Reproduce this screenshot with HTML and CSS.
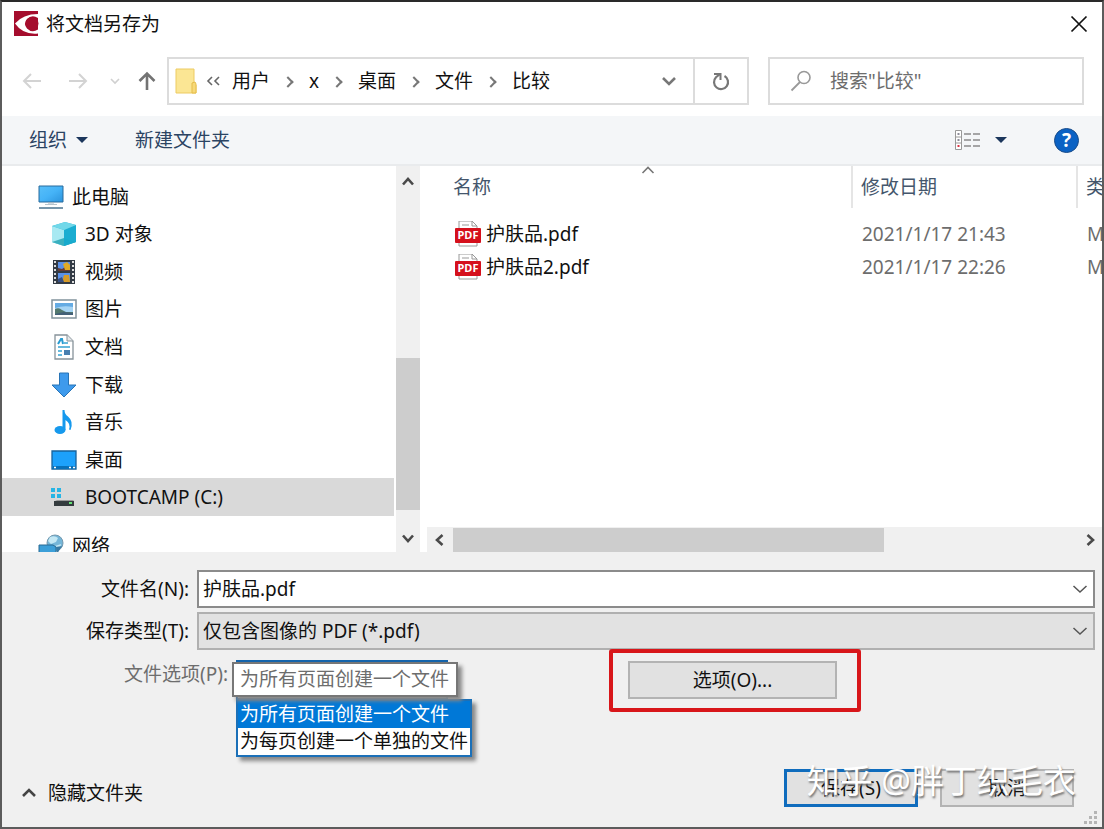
FILE: index.html
```html
<!DOCTYPE html>
<html lang="zh-CN">
<head>
<meta charset="utf-8">
<title>将文档另存为</title>
<link rel="stylesheet" href="styles.css">
</head>
<body>
<main class="window">
  <header class="titlebar">
    <svg class="app-icon" viewBox="0 0 26 26" aria-hidden="true"><path fill="#a50d2d" d="M1 0h24v25H1z"/><path fill="#fff" d="M2 12.500Q10 3 25 3v4Q19 3 14 8q-4 4.500 0 9.500 5 5 11 1v4Q10 24 2 12.500z"/><circle cx="19" cy="12.500" r="6.500" fill="#a50d2d"/></svg>
    <h1 class="title">将文档另存为</h1>
    <button class="icon-button close" aria-label="关闭"><svg width="18" height="18" viewBox="0 0 18 18"><path d="M1.500 1.500l15 15m0-15l-15 15" stroke="#111" stroke-width="1.700"/></svg></button>
  </header>

  <nav class="navbar" aria-label="位置">
    <div class="history">
      <button class="icon-button" aria-label="后退"><svg width="20" height="18" viewBox="0 0 20 18"><path d="M19 9H2m7-7L2 9l7 7" stroke="#d3d3d3" stroke-width="2" fill="none"/></svg></button>
      <button class="icon-button" aria-label="前进"><svg width="20" height="18" viewBox="0 0 20 18"><path d="M1 9h17m-7-7l7 7-7 7" stroke="#d3d3d3" stroke-width="2" fill="none"/></svg></button>
      <button class="icon-button" aria-label="最近位置"><svg width="10" height="8" viewBox="0 0 10 8"><path d="M1 2l4 4 4-4" stroke="#d0d0d0" stroke-width="1.600" fill="none"/></svg></button>
      <button class="icon-button" aria-label="向上"><svg width="18" height="20" viewBox="0 0 18 20"><path d="M9 19V2M1.500 10L9 2.500l7.500 7.500" stroke="#737373" stroke-width="2.600" fill="none"/></svg></button>
    </div>
    <div class="address">
      <svg class="folder" viewBox="0 0 22 26" aria-hidden="true"><path d="M1 1h18v14l2 2v8H1z" fill="#fbe694" stroke="#edcb63"/><path d="M17 25V15l3-1 1 2v9z" fill="#f7d978" stroke="#e5bd4b"/></svg>
      <svg class="overflow-mark" width="14" height="10" viewBox="0 0 14 10" aria-hidden="true"><path d="M6 1L2 5l4 4m7-8L9 5l4 4" stroke="#666" stroke-width="1.600" fill="none"/></svg>
      <ol class="crumbs">
        <li>用户</li><li>x</li><li>桌面</li><li>文件</li><li>比较</li>
      </ol>
      <button class="icon-button expand" aria-label="展开地址"><svg width="16" height="11" viewBox="0 0 16 11"><path d="M2 2l6 6 6-6" stroke="#777" stroke-width="2.600" fill="none"/></svg></button>
      <button class="icon-button refresh" aria-label="刷新"><svg width="20" height="20" viewBox="0 0 20 20"><path d="M13.500 5A7 7 0 1 1 5 6.200L8.500 3.500" stroke="#777" stroke-width="2.200" fill="none"/><path d="M3 3h6.500v6" stroke="#777" stroke-width="2" fill="none"/></svg></button>
    </div>
    <label class="search">
      <svg width="22" height="22" viewBox="0 0 22 22" aria-hidden="true"><circle cx="14" cy="7.500" r="6" stroke="#999" stroke-width="1.600" fill="none"/><path d="M10 12l-8.500 8.500" stroke="#999" stroke-width="1.800"/></svg>
      <input type="search" placeholder='搜索"比较"' aria-label="搜索">
    </label>
  </nav>

  <div class="toolbar">
    <button class="tool">组织 <span class="caret"></span></button>
    <button class="tool">新建文件夹</button>
    <button class="tool view" aria-label="更改视图"><svg width="27" height="22" viewBox="0 0 27 22"><path d="M1.500 1.500h6v19h-6zM1.500 8h6m-6 6h6" stroke="#999" fill="#fff"/><path d="M3.500 5h2m-2 6h2" stroke="#667" stroke-width="1.500"/><path d="M3.500 17h2" stroke="#d34" stroke-width="2"/><path d="M10 5h7m2 0h7m-16 6h7m2 0h7m-16 6h7m2 0h7" stroke="#8a8a8a" stroke-width="1.600"/></svg><span class="caret"></span></button>
    <button class="help" aria-label="帮助">?</button>
  </div>

  <section class="browser">
    <aside class="sidebar">
      <ul class="tree">
        <li class="root"><svg viewBox="0 0 26 26"><defs><linearGradient id="screen" x2="1" y2="1"><stop stop-color="#58bff9"/><stop offset=".5" stop-color="#45b3f7"/><stop offset="1" stop-color="#2b93dc"/></linearGradient></defs><path d="M1 2h24v16H1z" fill="url(#screen)" stroke="#286b9c"/><path d="M10 18h6v1.500h-6z" fill="#9fb3c2"/><path d="M7 20.500h12" stroke="#b8c4cc"/><path d="M1 24h24" stroke="#7796ab" stroke-width="2"/></svg><span>此电脑</span></li>
        <li><svg viewBox="0 0 26 26"><path d="M1 5l13-4 11 3v17l-12 4L1 21z" fill="#33b7d8"/><path d="M1 5l12 4v16L1 21z" fill="#a8e9f2"/><path d="M1 21l12-4 12 4-12 4z" fill="#169cae" opacity=".75"/><path d="M13 9l12-5v17l-12 4z" fill="#18acd0" opacity=".85"/><path d="M1 5l13-4 11 3-12 5z" fill="#71d8e9"/></svg><span>3D 对象</span></li>
        <li><svg viewBox="0 0 26 26"><path d="M2 1h22v24H2z" fill="#333b45"/><path d="M4 2v23M22 2v23" stroke="#ddd" stroke-width="2" stroke-dasharray="2 2"/><path d="M7 3h12v9H7zM7 14h12v9H7z" fill="#5a91e9"/><path d="M7 9l4 1 3-2 5 3v1H7z" fill="#653d37"/><path d="M12 5l4-2 3 3v5h-5z" fill="#e0aa25"/><path d="M13 16h5l1 7h-8z" fill="#d79b29"/><path d="M7 20l4-2 2 5H7z" fill="#385084"/></svg><span>视频</span></li>
        <li><svg viewBox="0 0 26 26"><path d="M1 4h24v18H1z" fill="#fff" stroke="#81929c" stroke-width="1.500"/><path d="M4 7h18v12H4z" fill="#a5d4f4"/><path d="M4 7h18v4q-9-2-18 1z" fill="#64abe3"/><path d="M4 13q4-2 7 1l4 2h7v3H4z" fill="#53796f"/><path d="M4 18l9-2 9 1v2H4z" fill="#426078"/></svg><span>图片</span></li>
        <li><svg viewBox="0 0 26 26"><path d="M4 1h12l6 6v18H4z" fill="#fff" stroke="#87939a" stroke-width="1.300"/><path d="M16 1v6h6" fill="#e5e8ea" stroke="#87939a"/><path d="M7 10l3-5h1l1 5" fill="none" stroke="#289bd1" stroke-width="2"/><path d="M13 9h4m-10 4h12m-12 4h4m-4 4h4" stroke="#35a2d2" stroke-width="1.500"/><path d="M13 16h6v5h-6z" fill="#487fb0"/></svg><span>文档</span></li>
        <li><svg viewBox="0 0 26 26"><path d="M8.500 1h9v12H25L13 25 1 13h7.500z" fill="#3e9aec" stroke="#2874b6"/></svg><span>下载</span></li>
        <li><svg viewBox="0 0 26 26"><ellipse cx="9" cy="21" rx="5.500" ry="4" fill="#1699ed"/><path d="M11.500 21V1h2q0 4 3.500 6.500 6 5 2.500 13.500l-1.500-.5q2-6-3.500-9.500V21z" fill="#1699ed"/></svg><span>音乐</span></li>
        <li><svg viewBox="0 0 26 26"><path d="M1 4h24v18H1z" fill="#1da1fb" stroke="#17639c" stroke-width="1.300"/><path d="M2 19h22v3H2z" fill="#0870b9"/><path d="M3 20.500h2m13 0h2m2 0h2" stroke="#fff" stroke-width="1.500"/></svg><span>桌面</span></li>
        <li class="selected"><svg viewBox="0 0 26 26"><path d="M0 4h4v4H0zM6 4h4v4H6zM0 10h4v4H0zM6 10h4v4H6z" fill="#27b5e5"/><path d="M4 17l2-1h16l1 1z" fill="#999"/><path d="M3 17h20v5H3z" fill="#343b3e"/><path d="M18 19h3" stroke="#65e276" stroke-width="2"/></svg><span>BOOTCAMP (C:)</span></li>
      </ul>
      <ul class="tree network">
        <li class="root"><svg viewBox="0 0 26 26"><circle cx="17" cy="10" r="8" fill="#75b6d8" stroke="#7598ad"/><path d="M12 4q5-2 8 1l-2 4-5 2-3-3zM17 13l6-2-1 5z" fill="#c4e8f4"/><path d="M1 12h14l3 2v12H1z" fill="#3c9fd8" stroke="#296b93"/><path d="M18 14l6-1-5 8z" fill="#387aa3"/></svg><span>网络</span></li>
      </ul>
    </aside>
    <div class="vscroll" aria-hidden="true">
      <svg width="14" height="11" viewBox="0 0 14 11"><path d="M2 8.500L7 3l5 5.500" stroke="#4a4a4a" stroke-width="2.600" fill="none"/></svg>
      <div class="vthumb"></div>
      <svg width="14" height="11" viewBox="0 0 14 11"><path d="M2 2.500L7 8l5-5.500" stroke="#4a4a4a" stroke-width="2.600" fill="none"/></svg>
    </div>
    <div class="files">
      <svg class="sort" width="14" height="8" viewBox="0 0 14 8" aria-hidden="true"><path d="M1.500 7L7 1.500 12.500 7" stroke="#777" stroke-width="1.600" fill="none"/></svg>
      <table class="file-table">
        <thead><tr><th class="name">名称</th><th class="date">修改日期</th><th class="type">类</th></tr></thead>
        <tbody>
          <tr><td class="name"><div class="file"><svg viewBox="0 0 26 26" aria-hidden="true"><path d="M4 0h13l5 5v20H4z" fill="#fff" stroke="#999"/><path d="M17 0v5h5M7 4h7" fill="none" stroke="#999"/><rect y="7" width="26" height="15" rx="1" fill="#d5101c"/><text class="badge" x="13" y="18">PDF</text></svg><span>护肤品.pdf</span></div></td><td>2021/1/17 21:43</td><td class="type">M</td></tr>
          <tr><td class="name"><div class="file"><svg viewBox="0 0 26 26" aria-hidden="true"><path d="M4 0h13l5 5v20H4z" fill="#fff" stroke="#999"/><path d="M17 0v5h5M7 4h7" fill="none" stroke="#999"/><rect y="7" width="26" height="15" rx="1" fill="#d5101c"/><text class="badge" x="13" y="18">PDF</text></svg><span>护肤品2.pdf</span></div></td><td>2021/1/17 22:26</td><td class="type">M</td></tr>
        </tbody>
      </table>
      <div class="hscroll" aria-hidden="true">
        <svg width="11" height="14" viewBox="0 0 11 14"><path d="M8.500 2L3 7l5.500 5" stroke="#4a4a4a" stroke-width="2.600" fill="none"/></svg>
        <div class="htrack"><div class="hthumb"></div></div>
        <svg width="11" height="14" viewBox="0 0 11 14"><path d="M2.500 2L8 7l-5.500 5" stroke="#4a4a4a" stroke-width="2.600" fill="none"/></svg>
      </div>
    </div>
  </section>

  <form class="form">
    <div class="row">
      <label for="filename">文件名(N):</label>
      <div class="field"><input id="filename" value="护肤品.pdf"><svg width="16" height="10" viewBox="0 0 16 10" aria-hidden="true"><path d="M1.500 2L8 8l6.500-6" stroke="#555" stroke-width="1.500" fill="none"/></svg></div>
    </div>
    <div class="row">
      <label for="filetype">保存类型(T):</label>
      <div class="field gray"><select id="filetype"><option>仅包含图像的 PDF (*.pdf)</option></select><svg width="16" height="10" viewBox="0 0 16 10" aria-hidden="true"><path d="M1.500 2L8 8l6.500-6" stroke="#555" stroke-width="1.500" fill="none"/></svg></div>
    </div>
    <div class="row options">
      <label class="muted" for="fileoption">文件选项(P):</label>
      <div class="combo">
        <select id="fileoption"></select>
        <div class="tooltip" role="tooltip">为所有页面创建一个文件</div>
        <ul class="menu" role="listbox"><li class="active" role="option" aria-selected="true">为所有页面创建一个文件</li><li role="option">为每页创建一个单独的文件</li></ul>
      </div>
      <div class="options-button"><button type="button" class="button">选项(O)...</button><span class="highlight"></span></div>
    </div>
    <div class="actions">
      <button type="button" class="hide"><svg width="16" height="11" viewBox="0 0 16 11"><path d="M2 9l6-6 6 6" stroke="#444" stroke-width="2.600" fill="none"/></svg>隐藏文件夹</button>
      <div class="confirm">
        <button type="button" class="button primary">保存(S)</button>
        <button type="button" class="button">取消</button>
        <span class="watermark">知乎 @胖丁织毛衣</span>
      </div>
    </div>
  </form>
  <svg class="grip" width="14" height="14" viewBox="0 0 14 14" aria-hidden="true"><path d="M10 0h3v3h-3zM5 5h3v3H5zM10 5h3v3h-3zM0 10h3v3H0zM5 10h3v3H5zM10 10h3v3h-3z" fill="#b5b5b5"/></svg>
</main>
</body>
</html>
```
FILE: styles.css
```css
* { box-sizing: border-box; }
body, h1, ul, ol { margin: 0; padding: 0; }
ul, ol { list-style: none; }
body, button, input, select {
  font-family: "Noto Sans", "Noto Sans CJK SC", sans-serif;
  font-size: 19px;
  line-height: 26px;
  color: #111;
}
button, input, select { margin: 0; padding: 0; border: 0; background: none; }
svg { flex: none; display: block; }

.window {
  position: relative;
  display: flex;
  flex-direction: column;
  min-height: 100vh;
  overflow: hidden;
  background: #fff;
  border: 2px solid #5c5c5c;
  border-top-color: #2a2a2a;
}

.titlebar { display: flex; align-items: center; height: 44px; padding: 0 14px 0 11px; }
.app-icon { width: 26px; height: 26px; }
.title { flex: 1; margin-left: 7px; font-size: 19px; font-weight: 400; }
.icon-button { display: flex; align-items: center; justify-content: center; }

.navbar { display: flex; height: 70px; padding: 11px 18px 11px 20px; }
.history { display: flex; align-items: center; gap: 26px; flex: none; width: 145px; }
.history .icon-button:nth-child(3) { margin-left: -4px; }
.history .icon-button:nth-child(4) { margin-left: -8px; }
.address { flex: 578 1 0; display: flex; align-items: center; border: 2px solid #dcdcdc; }
.folder { width: 22px; height: 26px; margin-left: 6px; }
.overflow-mark { margin: 0 12px 0 9px; }
.crumbs { display: flex; flex: 1; white-space: nowrap; }
.crumbs li { display: flex; align-items: center; }
.crumbs li + li::before {
  content: "";
  width: 6px;
  height: 6px;
  margin: 2px 17px 0 14px;
  border: solid #777;
  border-width: 2px 2px 0 0;
  transform: rotate(45deg);
}
.expand { width: 48px; height: 100%; }
.refresh { width: 54px; height: 100%; border-left: 2px solid #dcdcdc; }
.search { flex: 272 1 0; min-width: 0; display: flex; align-items: center; gap: 18px; margin-left: 19px; padding: 0 20px; border: 2px solid #dcdcdc; }
.search input { flex: 1; min-width: 0; outline: 0; appearance: none; }
.search input::placeholder { color: #6d6d6d; opacity: 1; }

.toolbar {
  display: flex;
  align-items: center;
  gap: 47px;
  height: 50px;
  padding: 0 23px 0 27px;
  background: #f4f6f8;
  border-bottom: 2px solid #e9ebed;
}
.tool { display: flex; align-items: center; gap: 9px; color: #2b4463; }
.caret { border: 6px solid transparent; border-top-color: #1b365c; border-bottom: 0; }
.view { gap: 14px; margin-left: auto; }
.help { width: 25px; height: 25px; border-radius: 50%; background: #0b62c4; border: 1px solid #1a4c8a; color: #fff; font-size: 19px; font-weight: 700; line-height: 23px; }

.browser { display: flex; flex: 1; min-height: 386px; max-height: 386px; overflow: hidden; }
.sidebar { flex: 392 1 0; padding-top: 12px; }
.tree { display: grid; grid-template-rows: repeat(9, 1fr); height: 338px; }
.tree li { display: flex; align-items: center; gap: 8px; padding-left: 49px; }
.tree li.root { padding-left: 36px; }
.tree svg { width: 26px; height: 26px; }
.tree .selected { background: #d9d9d9; }
.network { display: block; height: 26px; margin-top: 17px; }
.vscroll { display: flex; flex-direction: column; align-items: center; justify-content: space-between; width: 24px; margin: 0 7px 0 2px; padding: 10px 0 8px; background: #f0f0f0; }
.vthumb { width: 24px; height: 152px; margin-top: auto; margin-bottom: 23px; background: #cdcdcd; }

.files { position: relative; flex: 675 1 0; display: flex; flex-direction: column; justify-content: space-between; min-width: 0; }
.sort { position: absolute; top: 0; left: 214px; }
.file-table { width: 100%; table-layout: fixed; border-collapse: collapse; }
.file-table th, .file-table td { padding: 0 0 0 10px; text-align: left; font-weight: 400; white-space: nowrap; overflow: hidden; }
.file-table th { height: 42px; padding-left: 8px; color: #44566c; border-right: 2px solid #e5e5e5; }
.file-table th:last-child { border-right: 0; }
.file-table th.name { padding-left: 26px; }
.file-table td.name { padding-left: 28px; }
.file-table .date { width: 225px; }
.file-table .type { width: 25px; }
.file-table tbody::before { content: ""; display: block; height: 9px; }
.file-table td { height: 33px; color: #6d6d6d; }
.file { display: flex; align-items: center; gap: 5px; color: #111; }
.file svg { width: 26px; height: 26px; }
.badge { fill: #fff; font-size: 11px; font-weight: 700; text-anchor: middle; }
.hscroll { display: flex; align-items: center; height: 25px; padding: 0 6px 0 7px; background: #f0f0f0; }
.htrack { flex: 1; margin: 0 8px; }
.hthumb { width: 69%; height: 24px; background: #cdcdcd; }

.form { display: flex; flex: 1; flex-direction: column; gap: 4px; min-height: 275px; padding: 18px 7px 20px 19px; background: #f0f0f0; }
.row { display: flex; align-items: center; height: 38px; }
.row > label { width: 168px; text-align: right; white-space: nowrap; }
.field { flex: 1; display: flex; align-items: center; height: 38px; margin-left: 8px; padding: 0 5px 0 4px; background: #fff; border: 2px solid #8b8b8b; }
.field input, .field select { flex: 1; min-width: 0; height: 34px; outline: 0; appearance: none; }
.field input { padding-bottom: 3px; }
.field.gray { background: #e2e2e2; border-color: #b0b0b0; }
.options { margin-top: 7px; }
.row > label.muted { align-self: flex-start; width: 207px; color: #6d6d6d; }
.combo { position: relative; width: 212px; height: 40px; margin-left: 8px; }
.combo select { width: 100%; height: 40px; appearance: none; background: #e4eef8; border: 2px solid #1464ac; }
.tooltip { position: absolute; z-index: 2; top: 2px; left: -4px; padding: 2px 7px 3px 6px; background: #fff; border: 2px solid #777; box-shadow: 4px 4px 4px #888; color: #6d6d6d; white-space: nowrap; }
.menu { position: absolute; z-index: 1; top: 39px; left: 0; background: #fff; border: 2px solid #1b70b8; box-shadow: 4px 4px 4px #888; white-space: nowrap; }
.menu li { padding: 0 2px; line-height: 27px; }
.menu .active { background: #0078d7; color: #fff; }
.options-button { position: relative; margin-left: 180px; }
.button { width: 134px; height: 38px; background: #e1e1e1; border: 2px solid #b3b3b3; }
.options-button .button { display: block; width: 209px; }
.highlight { position: absolute; inset: -12px -24px -13px -19px; border: 4px solid #d8161a; border-radius: 3px; pointer-events: none; }
.actions { display: flex; align-items: center; justify-content: space-between; margin-top: auto; padding-right: 21px; }
.hide { display: flex; align-items: center; gap: 11px; padding-top: 9px; }
.confirm { position: relative; display: flex; gap: 22px; }
.button.primary { border: 3px solid #0f6cbd; }
.watermark { position: absolute; right: -2px; top: -7px; color: #fff; font-size: 33px; line-height: 38px; text-shadow: 1px 2px 2px #777; white-space: nowrap; pointer-events: none; }
.grip { position: absolute; right: 4px; bottom: 2px; }
```
